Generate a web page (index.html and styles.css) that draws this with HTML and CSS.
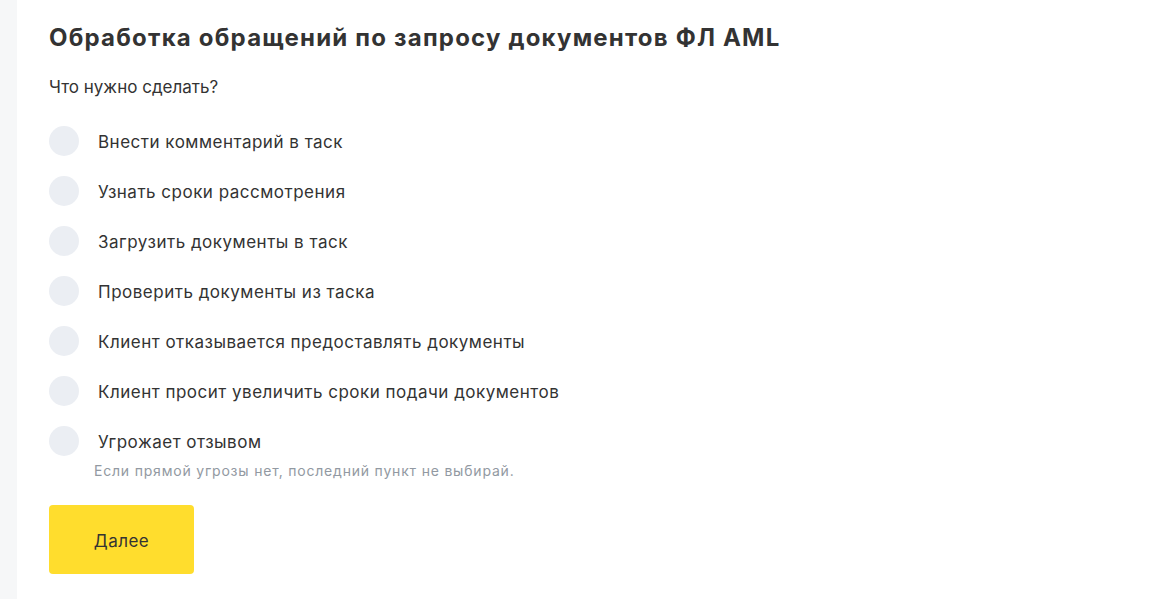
FILE: index.html
```html
<!DOCTYPE html>
<html lang="ru">
<head>
<meta charset="utf-8">
<link rel="stylesheet" href="styles.css">
</head>
<body>
<div class="page">
  <aside class="side"></aside>
  <main class="content">
    <h1 class="title">Обработка обращений по запросу документов ФЛ AML</h1>
    <p class="question">Что нужно сделать?</p>
    <ul class="options">
      <li class="option"><span class="radio"></span><span class="label">Внести комментарий в таск</span></li>
      <li class="option"><span class="radio"></span><span class="label">Узнать сроки рассмотрения</span></li>
      <li class="option"><span class="radio"></span><span class="label">Загрузить документы в таск</span></li>
      <li class="option"><span class="radio"></span><span class="label">Проверить документы из таска</span></li>
      <li class="option"><span class="radio"></span><span class="label">Клиент отказывается предоставлять документы</span></li>
      <li class="option"><span class="radio"></span><span class="label">Клиент просит увеличить сроки подачи документов</span></li>
      <li class="option"><span class="radio"></span><span class="label">Угрожает отзывом</span></li>
    </ul>
    <p class="note">Если прямой угрозы нет, последний пункт не выбирай.</p>
    <button class="next">Далее</button>
  </main>
</div>
</body>
</html>
```
FILE: styles.css
```css
html, body {
  margin: 0;
  padding: 0;
  background: #fff;
}
body {
  font-family: Inter, "Liberation Sans", Arial, sans-serif;
  color: #333;
}
.page {
  display: flex;
  min-height: 599px;
}
.side {
  width: 17px;
  background: #f6f7f8;
  flex: none;
}
.content {
  padding: 22px 0 0 32px;
}
.title {
  margin: 0;
  font-size: 24px;
  line-height: 32px;
  font-weight: 700;
  letter-spacing: 1.2px;
  color: #333;
}
.question {
  margin: 21px 0 0;
  font-size: 17px;
  line-height: 24px;
  color: #333;
}
.options {
  list-style: none;
  margin: 27px 0 0;
  padding: 0;
  display: flex;
  flex-direction: column;
  gap: 20px;
}
.option {
  display: flex;
  align-items: center;
  height: 30px;
}
.radio {
  width: 30px;
  height: 30px;
  border-radius: 50%;
  background: #ebeef3;
  flex: none;
}
.label {
  margin-left: 19px;
  padding-top: 2px;
  font-size: 17px;
  line-height: 24px;
  letter-spacing: 0.5px;
  color: #333;
}
.note {
  margin: 5px 0 0 45px;
  font-size: 14px;
  line-height: 20px;
  letter-spacing: 0.8px;
  color: #9299a2;
}
.next {
  margin-top: 24px;
  width: 145px;
  height: 69px;
  border: none;
  border-radius: 4px;
  background: #ffdd2d;
  font-family: Inter, "Liberation Sans", Arial, sans-serif;
  font-size: 17px;
  letter-spacing: 0.5px;
  padding-top: 4px;
  color: #333;
  display: block;
}
```
